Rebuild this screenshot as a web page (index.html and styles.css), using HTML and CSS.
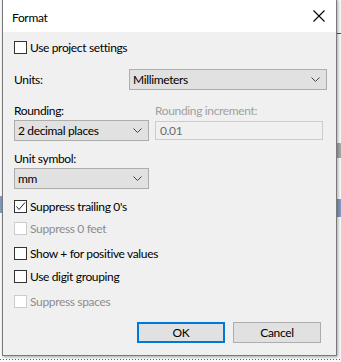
FILE: index.html
```html
<!DOCTYPE html>
<html>
<head>
<meta charset="utf-8">
<link rel="stylesheet" href="styles.css">
</head>
<body>
<div class="dialog">
  <div class="titlebar">
    <span class="title">Format</span>
    <svg class="close" width="12" height="12" viewBox="0 0 12 12"><path d="M0.5 0.5 L11.5 11.5 M11.5 0.5 L0.5 11.5" stroke="#000" stroke-width="1.1" fill="none"/></svg>
  </div>
  <div class="content">
    <label class="check r-project"><span class="box"></span><span>Use project settings</span></label>

    <div class="units-row">
      <span class="lbl">Units:</span>
      <div class="select wide"><span>Millimeters</span><svg class="chev" width="9" height="5" viewBox="0 0 9 5"><path d="M0.5 0.5 L4.5 4.5 L8.5 0.5" stroke="#444" fill="none"/></svg></div>
    </div>

    <div class="round-grid">
      <span class="lbl">Rounding:</span>
      <span class="lbl dis">Rounding increment:</span>
      <div class="select narrow"><span>2 decimal places</span><svg class="chev" width="9" height="5" viewBox="0 0 9 5"><path d="M0.5 0.5 L4.5 4.5 L8.5 0.5" stroke="#444" fill="none"/></svg></div>
      <div class="input">0.01</div>
    </div>

    <span class="lbl sym-lbl">Unit symbol:</span>
    <div class="select narrow sym"><span>mm</span><svg class="chev" width="9" height="5" viewBox="0 0 9 5"><path d="M0.5 0.5 L4.5 4.5 L8.5 0.5" stroke="#444" fill="none"/></svg></div>

    <label class="check r1"><span class="box"><svg width="11" height="11" viewBox="0 0 11 11"><path d="M1.5 5.5 L4 8.5 L10 1.5" stroke="#222" stroke-width="1" fill="none"/></svg></span><span>Suppress trailing 0's</span></label>
    <label class="check r2 disabled"><span class="box"></span><span>Suppress 0 feet</span></label>
    <label class="check r3"><span class="box"></span><span>Show + for positive values</span></label>
    <label class="check r4"><span class="box"></span><span>Use digit grouping</span></label>
    <label class="check r5 disabled"><span class="box"></span><span>Suppress spaces</span></label>

    <div class="buttons">
      <div class="btn default">OK</div>
      <div class="btn">Cancel</div>
    </div>
  </div>
</div>
</body>
</html>
```
FILE: styles.css
```css
html, body {
  margin: 0;
  padding: 0;
}
body {
  width: 341px;
  height: 362px;
  overflow: hidden;
  background-color: #fbfbfb;
  background-image:
    linear-gradient(#7f9cc0, #7f9cc0),
    linear-gradient(#a8a8a8, #a8a8a8),
    linear-gradient(#555, #555),
    linear-gradient(#7f9cc0, #7f9cc0),
    repeating-linear-gradient(90deg, #666 0 1px, transparent 1px 3px);
  background-size: 5px 18px, 5px 15px, 5px 1px, 2px 17px, 341px 1px;
  background-position: 336px 199px, 336px 143px, 336px 33px, 0 196px, 0 359px;
  background-repeat: no-repeat;
  font-family: "Segoe UI", Lato, "Liberation Sans", sans-serif;
  font-size: 12px;
  letter-spacing: -0.35px;
  color: #000;
}
.dialog {
  margin-left: 2px;
  margin-top: -1px;
  width: 333px;
  height: 355px;
  border: 1px solid #7a7a7a;
  background: #f0f0f0;
  box-shadow: 1px 1px 3px rgba(0,0,0,0.35);
  display: flex;
  flex-direction: column;
}
.titlebar {
  height: 32px;
  background: #fff;
  display: flex;
  align-items: center;
  justify-content: space-between;
  padding: 0 11px 0 9px;
  flex: none;
}
.title {
  font-size: 12px;
  margin-top: 2px;
}
.close {
  display: block;
}
.content {
  padding: 9px 0 0 11px;
  display: flex;
  flex-direction: column;
  align-items: flex-start;
}
.lbl {
  line-height: 15px;
  display: block;
}
.dis {
  color: #a0a0a0;
}
.check {
  display: flex;
  align-items: center;
  height: 13px;
  line-height: 13px;
}
.box {
  width: 11px;
  height: 11px;
  border: 1px solid #333;
  background: #fff;
  margin-right: 3px;
  display: flex;
  align-items: center;
  justify-content: center;
}
.box svg { display: block; }
.check.disabled { color: #8d8d8d; }
.check.disabled .box { border-color: #cccccc; }
.units-row {
  margin-top: 15px;
  width: 313px;
  display: flex;
  align-items: center;
  justify-content: space-between;
}
.select {
  box-sizing: border-box;
  height: 21px;
  background: #e1e1e1;
  border: 1px solid #adadad;
  display: flex;
  align-items: center;
  justify-content: space-between;
  padding: 0 6px 0 3px;
}
.select.wide { width: 198px; }
.select.narrow { width: 135px; }
.chev { display: block; }
.round-grid {
  margin-top: 13px;
  display: grid;
  grid-template-columns: 135px 168px;
  column-gap: 6px;
  row-gap: 2px;
  align-items: center;
}
.input {
  box-sizing: border-box;
  height: 19px;
  border: 1px solid #cccccc;
  background: #f0f0f0;
  color: #6d6d6d;
  padding-left: 4px;
  line-height: 17px;
}
.sym-lbl { margin-top: 10px; }
.sym { margin-top: 2px; }
.r1 { margin-top: 11px; }
.r2 { margin-top: 9px; }
.r3 { margin-top: 12px; }
.r4 { margin-top: 10px; }
.r5 { margin-top: 12px; }
.buttons {
  margin-top: 14px;
  align-self: flex-end;
  margin-right: 15px;
  display: flex;
  gap: 8px;
}
.btn {
  box-sizing: border-box;
  width: 88px;
  height: 21px;
  border: 1px solid #adadad;
  background: #e1e1e1;
  display: flex;
  align-items: center;
  justify-content: center;
}
.btn.default {
  border: 2px solid #0078d7;
}
```
